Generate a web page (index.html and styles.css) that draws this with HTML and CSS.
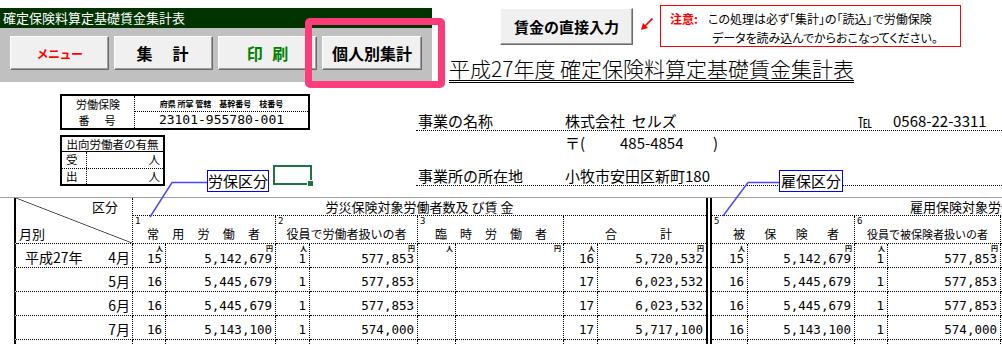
FILE: index.html
```html
<!DOCTYPE html>
<html>
<head>
    <title>確定保険料算定基礎賃金集計表</title>
    <link rel="stylesheet" href="styles.css">
</head>
<body>
    <div class="sheet">
        <div class="top">
            <div class="toolbar">
                <div class="toolbar-title">確定保険料算定基礎賃金集計表</div>
                <div class="toolbar-body">
                    <button class="btn btn-menu">メニュー</button>
                    <button class="btn btn-sum">集　計</button>
                    <button class="btn btn-print">印 刷</button>
                    <button class="btn btn-person">個人別集計</button>
                </div>
            </div>
            <div class="top-right">
                <div class="actions">
                    <button class="btn btn-direct">賃金の直接入力</button>
                    <svg class="arrow" viewBox="0 0 12 12">
                        <line x1="11.5" y1="0.5" x2="3" y2="9" stroke="#f00" stroke-width="1.6"/>
                        <polygon points="0,12 7,10 2,5" fill="#f00"/>
                    </svg>
                    <div class="note">
                        <div class="note-label">注意:</div>
                        <div class="note-text">
                            <div>この処理は必ず「集計」の「読込」で労働保険</div>
                            <div class="note-line2">データを読み込んでからおこなってください。</div>
                        </div>
                    </div>
                </div>
                <h1 class="title">平成27年度 確定保険料算定基礎賃金集計表</h1>
            </div>
        </div>

        <div class="info">
            <div class="info-left">
                <div class="ins-box">
                    <div class="ins-head">
                        <div>労働保険</div>
                        <div class="ins-head-no">番　号</div>
                    </div>
                    <div class="ins-body">
                        <div class="ins-caption">府県 所掌 管轄　基幹番号　枝番号</div>
                        <div class="ins-number">23101-955780-001</div>
                    </div>
                </div>
                <div class="loan-box">
                    <div class="loan-head">出向労働者の有無</div>
                    <div class="loan-row"><span class="loan-key">受</span><span class="loan-val">人</span></div>
                    <div class="loan-row"><span class="loan-key">出</span><span class="loan-val">人</span></div>
                </div>
            </div>
            <div class="info-right">
                <div class="biz-row">
                    <span class="biz-label">事業の名称</span>
                    <span class="biz-value">株式会社&nbsp;&nbsp;セルズ</span>
                    <span class="tel-mark">℡</span>
                    <span class="tel-no">0568-22-3311</span>
                </div>
                <div class="zip-row">
                    <span class="zip-mark">〒(</span>
                    <span class="zip-no">485-4854</span>
                    <span>)</span>
                </div>
                <div class="biz-row addr-row">
                    <span class="biz-label">事業所の所在地</span>
                    <span class="biz-value">小牧市安田区新町180</span>
                </div>
            </div>
        </div>

        <div class="ledger">
            <div class="cell corner">
                <div class="corner-top">区分</div>
                <div class="corner-bottom">月別</div>
            </div>
            <div class="cell head-rousai">労災保険対象労働者数及&nbsp;び賃&nbsp;金</div>
            <div class="sep"></div>
            <div class="cell head-koyou">雇用保険対象労働者数及び賃金</div>

            <div class="cell sub sub-1"><div class="sub-no">1</div><div class="sub-name spread">常用労働者</div></div>
            <div class="cell sub sub-2"><div class="sub-no">2</div><div class="sub-name">役員で労働者扱いの者</div></div>
            <div class="cell sub sub-3"><div class="sub-no">3</div><div class="sub-name spread">臨時労働者</div></div>
            <div class="cell sub sub-4 end"><div class="sub-no">&nbsp;</div><div class="sub-name spread">合計</div></div>
            <div class="cell sub sub-5"><div class="sub-no">5</div><div class="sub-name spread">被保険者</div></div>
            <div class="cell sub sub-6"><div class="sub-no">6</div><div class="sub-name small">役員で被保険者扱いの者</div></div>
            <div class="cell sub sub-7"><div class="sub-no">7</div><div class="sub-name"></div></div>

            <div class="cell label"><span>平成27年</span><span>4月</span></div>
            <div class="cell num first"><span class="unit">人</span><span>15</span></div>
            <div class="cell num first"><span class="unit">円</span><span>5,142,679</span></div>
            <div class="cell num first"><span class="unit">人</span><span>1</span></div>
            <div class="cell num first"><span class="unit">円</span><span>577,853</span></div>
            <div class="cell num first"><span class="unit">人</span><span></span></div>
            <div class="cell num first"><span class="unit">円</span><span></span></div>
            <div class="cell num first"><span class="unit">人</span><span>16</span></div>
            <div class="cell num first end"><span class="unit">円</span><span>5,720,532</span></div>
            <div class="cell num first"><span class="unit">人</span><span>15</span></div>
            <div class="cell num first"><span class="unit">円</span><span>5,142,679</span></div>
            <div class="cell num first"><span class="unit">人</span><span>1</span></div>
            <div class="cell num first"><span class="unit">円</span><span>577,853</span></div>
            <div class="cell num first"><span class="unit">人</span><span></span></div>
            <div class="cell num first"><span class="unit">円</span><span></span></div>

            <div class="cell label"><span></span><span>5月</span></div>
            <div class="cell num">16</div>
            <div class="cell num">5,445,679</div>
            <div class="cell num">1</div>
            <div class="cell num">577,853</div>
            <div class="cell num"></div>
            <div class="cell num"></div>
            <div class="cell num">17</div>
            <div class="cell num end">6,023,532</div>
            <div class="cell num">16</div>
            <div class="cell num">5,445,679</div>
            <div class="cell num">1</div>
            <div class="cell num">577,853</div>
            <div class="cell num"></div>
            <div class="cell num"></div>

            <div class="cell label"><span></span><span>6月</span></div>
            <div class="cell num">16</div>
            <div class="cell num">5,445,679</div>
            <div class="cell num">1</div>
            <div class="cell num">577,853</div>
            <div class="cell num"></div>
            <div class="cell num"></div>
            <div class="cell num">17</div>
            <div class="cell num end">6,023,532</div>
            <div class="cell num">16</div>
            <div class="cell num">5,445,679</div>
            <div class="cell num">1</div>
            <div class="cell num">577,853</div>
            <div class="cell num"></div>
            <div class="cell num"></div>

            <div class="cell label"><span></span><span>7月</span></div>
            <div class="cell num">16</div>
            <div class="cell num">5,143,100</div>
            <div class="cell num">1</div>
            <div class="cell num">574,000</div>
            <div class="cell num"></div>
            <div class="cell num"></div>
            <div class="cell num">17</div>
            <div class="cell num end">5,717,100</div>
            <div class="cell num">16</div>
            <div class="cell num">5,143,100</div>
            <div class="cell num">1</div>
            <div class="cell num">574,000</div>
            <div class="cell num"></div>
            <div class="cell num"></div>

            <div class="cell label"><span></span><span></span></div>
            <div class="cell num"></div>
            <div class="cell num"></div>
            <div class="cell num"></div>
            <div class="cell num"></div>
            <div class="cell num"></div>
            <div class="cell num"></div>
            <div class="cell num"></div>
            <div class="cell num end"></div>
            <div class="cell num"></div>
            <div class="cell num"></div>
            <div class="cell num"></div>
            <div class="cell num"></div>
            <div class="cell num"></div>
            <div class="cell num"></div>
        </div>

        <!-- annotations drawn over the sheet -->
        <div class="highlight"></div>
        <svg class="callouts" width="1002" height="344">
            <polyline points="207,182.5 172,182.5 150,217" fill="none" stroke="#4a4aff" stroke-width="1.5"/>
            <polyline points="779,182.5 748,182.5 723,216" fill="none" stroke="#4a4aff" stroke-width="1.5"/>
        </svg>
        <div class="tag tag-rouho">労保区分</div>
        <div class="tag tag-koho">雇保区分</div>
        <div class="selection"></div>
    </div>
</body>
</html>
```

FILE: styles.css
```css
body {
    margin: 0;
    overflow: hidden;
    background: #fff;
    color: #000;
    font-family: "Noto Sans CJK JP", sans-serif;
}
.sheet {
    position: relative;
    width: 1002px;
    height: 344px;
    overflow: hidden;
}

/* top area */
.top {
    display: flex;
    align-items: flex-start;
}
.toolbar {
    margin-top: 8px;
    width: 432px;
    flex-shrink: 0;
}
.toolbar-title {
    height: 20px;
    background: #003300;
    color: #fff;
    font-size: 13px;
    line-height: 20px;
    padding-left: 3px;
}
.toolbar-body {
    height: 54px;
    box-sizing: border-box;
    background: #c0c0c0;
    display: flex;
    gap: 5px;
    padding: 8px 0 0 10px;
}
.btn {
    width: 99px;
    height: 34px;
    padding: 0;
    background: #f0f0f0;
    border: 1px solid;
    border-color: #fff #6a6a6a #6a6a6a #fff;
    box-shadow: inset -1px -1px 0 #a0a0a0;
    font-family: inherit;
    font-weight: 700;
    font-size: 16px;
    color: #000;
}
.btn-menu {
    color: #f00;
    font-size: 12px;
    letter-spacing: -0.5px;
}
.btn-sum {
    letter-spacing: 2px;
}
.btn-print {
    color: #008000;
    word-spacing: 6px;
}
.btn-person {
    width: 100px;
}
.top-right {
    margin-left: 17px;
}
.actions {
    display: flex;
    align-items: flex-start;
}
.btn-direct {
    margin: 8px 0 0 51px;
    width: 133px;
    height: 37px;
    font-size: 15px;
}
.arrow {
    margin: 18px 0 0 8px;
    width: 12px;
    height: 12px;
}
.note {
    margin: 5px 0 0 7px;
    width: 301px;
    height: 42px;
    box-sizing: border-box;
    border: 1px solid #f00;
    display: flex;
    padding: 3px 0 0 9px;
    font-size: 12px;
    line-height: 19px;
    font-feature-settings: "palt";
}
.note-label {
    width: 38px;
    color: #f00;
    font-weight: 700;
}
.note-line2 {
    padding-left: 4px;
}
.title {
    display: inline-block;
    margin: 9px 0 0;
    font-size: 21px;
    font-weight: 300;
    line-height: 24px;
    border-bottom: 3px double #000;
}

/* company info */
.info {
    height: 114px;
    box-sizing: border-box;
    padding-top: 11px;
    display: flex;
}
.info-left {
    width: 416px;
    flex-shrink: 0;
    padding-left: 60px;
    box-sizing: border-box;
}
.ins-box {
    width: 250px;
    height: 36px;
    box-sizing: border-box;
    border: 2px solid #000;
    display: flex;
}
.ins-head {
    width: 72px;
    border-right: 1px dotted #000;
    font-size: 11px;
    line-height: 16px;
    text-align: center;
}
.ins-head-no {
    letter-spacing: 2px;
}
.ins-body {
    flex: 1;
    text-align: center;
}
.ins-caption {
    height: 16px;
    box-sizing: border-box;
    border-bottom: 1px dotted #000;
    font-size: 8px;
    font-weight: 700;
    line-height: 15px;
    white-space: pre;
}
.ins-number {
    font-family: "DejaVu Sans Mono", monospace;
    font-size: 13px;
    line-height: 16px;
}
.loan-box {
    margin-top: 5px;
    width: 105px;
    box-sizing: border-box;
    border: 2px solid #000;
    font-size: 11.5px;
    line-height: 15px;
}
.loan-head {
    height: 14px;
    border-bottom: 1px solid #000;
    text-align: center;
    line-height: 14px;
}
.loan-row {
    display: flex;
    height: 16px;
}
.loan-row + .loan-row {
    border-top: 1px dotted #000;
    height: 15px;
}
.loan-key {
    width: 25px;
    padding-left: 4px;
    box-sizing: border-box;
    border-right: 1px dotted #000;
}
.loan-val {
    flex: 1;
    text-align: right;
    padding-right: 3px;
}
.info-right {
    flex: 1;
    font-size: 15px;
}
.biz-row {
    display: flex;
    height: 19px;
    line-height: 18px;
    margin-top: 18px;
    box-sizing: border-box;
    border-bottom: 1px dotted #000;
    white-space: nowrap;
}
.biz-label {
    width: 149px;
    flex-shrink: 0;
    padding-left: 2px;
    box-sizing: border-box;
}
.biz-value {
    width: 293px;
    flex-shrink: 0;
}
.tel-mark {
    width: 35px;
    font-size: 14px;
}
.zip-row {
    display: flex;
    margin: 3px 0 0 149px;
    height: 18px;
    line-height: 18px;
}
.zip-mark {
    width: 55px;
}
.zip-no {
    width: 93px;
}
.addr-row {
    margin-top: 15px;
}

/* ledger grid */
.ledger {
    display: grid;
    grid-template-columns: 119px 33px 110px 34px 108px 38px 108px 34px 108px 6px 36px 107px 33px 113px 34px 110px;
    grid-template-rows: 18px 28px;
    grid-auto-rows: 24px;
    width: max-content;
    padding-left: 14px;
    border-top: 1px solid #a0a0a0;
}
.cell {
    box-sizing: border-box;
    border-right: 1px dotted #000;
    border-bottom: 1px dotted #000;
    white-space: nowrap;
    overflow: hidden;
}
.cell.end {
    border-right: none;
}
.corner {
    grid-row: 1 / 3;
    grid-column: 1;
    border-left: 2px solid #000;
    display: flex;
    flex-direction: column;
    justify-content: space-between;
    font-size: 13px;
    line-height: 18px;
    background: linear-gradient(to top right, transparent calc(50% - 0.8px), #333 50%, transparent calc(50% + 0.8px));
}
.corner-top {
    text-align: right;
    padding-right: 14px;
}
.corner-bottom {
    padding-left: 3px;
}
.head-rousai {
    grid-row: 1;
    grid-column: 2 / 10;
    border-right: none;
    text-align: center;
    font-size: 13px;
    line-height: 17px;
}
.head-koyou {
    grid-row: 1;
    grid-column: 11 / 17;
    padding-left: 198px;
    font-size: 13px;
    line-height: 17px;
}
.sep {
    grid-column: 10;
    grid-row: 1 / span 7;
    border-left: 2px solid #000;
    border-right: 2px solid #000;
}
.sub {
    grid-row: 2;
    display: flex;
    flex-direction: column;
}
.sub-1 { grid-column: 2 / 4; }
.sub-2 { grid-column: 4 / 6; }
.sub-3 { grid-column: 6 / 8; }
.sub-4 { grid-column: 8 / 10; }
.sub-5 { grid-column: 11 / 13; }
.sub-6 { grid-column: 13 / 15; }
.sub-7 { grid-column: 15 / 17; }
.sub-no {
    font-family: "DejaVu Sans Mono", monospace;
    font-size: 9px;
    line-height: 10px;
    padding-left: 2px;
}
.sub-name {
    font-size: 12px;
    line-height: 16px;
    text-align: center;
}
.sub-name.small {
    font-size: 11px;
}
.spread {
    text-align: justify;
    text-align-last: justify;
}
.sub-1 .spread { padding: 0 15px 0 14px; }
.sub-3 .spread { padding: 0 16px 0 17px; }
.sub-4 .spread { padding: 0 34px 0 41px; }
.sub-5 .spread { padding: 0 15px 0 21px; }
.label {
    grid-column: 1;
    border-left: 2px solid #000;
    display: flex;
    justify-content: space-between;
    align-items: flex-end;
    padding: 0 2px 2px 9px;
    font-size: 14px;
    line-height: 16px;
}
.num {
    display: flex;
    flex-direction: column;
    justify-content: flex-end;
    align-items: flex-end;
    padding: 0 3px 2px 0;
    font-family: "DejaVu Sans Mono", monospace;
    font-size: 12.5px;
    line-height: 14px;
}
.num.first {
    justify-content: space-between;
}
.unit {
    font-family: "Noto Sans CJK JP", sans-serif;
    font-size: 7px;
    font-weight: 700;
    line-height: 8px;
    margin-right: -1px;
}

/* annotations */
.highlight {
    position: absolute;
    left: 305px;
    top: 18px;
    width: 140px;
    height: 70px;
    box-sizing: border-box;
    border: 7px solid #fe3b7a;
    border-radius: 5px;
}
.callouts {
    position: absolute;
    left: 0;
    top: 0;
    pointer-events: none;
}
.tag {
    position: absolute;
    top: 170px;
    height: 22px;
    box-sizing: border-box;
    border: 1px solid #00f;
    background: #fff;
    font-size: 15px;
    line-height: 20px;
    text-align: center;
}
.tag-rouho {
    left: 207px;
    width: 62px;
}
.tag-koho {
    left: 779px;
    width: 64px;
}
.selection {
    position: absolute;
    left: 273px;
    top: 165px;
    width: 39px;
    height: 20px;
    box-sizing: border-box;
    border: 2px solid #217346;
}
.selection::after {
    content: "";
    position: absolute;
    right: -4px;
    bottom: -4px;
    width: 5px;
    height: 5px;
    background: #217346;
    border: 1px solid #fff;
}
```
